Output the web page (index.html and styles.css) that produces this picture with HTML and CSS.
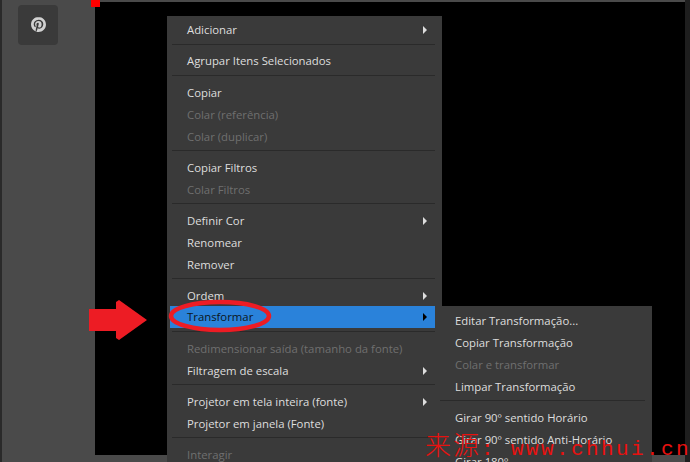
FILE: index.html
```html
<!DOCTYPE html>
<html>
<head>
  <title>Transformar</title>
  <link rel="stylesheet" href="styles.css">
</head>
<body>
  <div class="window">
    <div class="edge"></div>
    <div class="sidebar">
      <div class="source-btn">
        <svg class="pin-icon" viewBox="0 0 24 24"><path d="M12.017 0C5.396 0 .029 5.367.029 11.987c0 5.079 3.158 9.417 7.618 11.162-.105-.949-.199-2.403.041-3.439.219-.937 1.406-5.957 1.406-5.957s-.359-.72-.359-1.781c0-1.663.967-2.911 2.168-2.911 1.024 0 1.518.769 1.518 1.688 0 1.029-.653 2.567-.992 3.992-.285 1.193.6 2.165 1.775 2.165 2.128 0 3.768-2.245 3.768-5.487 0-2.861-2.063-4.869-5.008-4.869-3.41 0-5.409 2.562-5.409 5.199 0 1.033.394 2.143.889 2.741.099.12.112.225.085.345-.09.375-.293 1.199-.334 1.363-.053.225-.172.271-.401.165-1.495-.69-2.433-2.878-2.433-4.646 0-3.776 2.748-7.252 7.92-7.252 4.158 0 7.392 2.967 7.392 6.923 0 4.135-2.607 7.462-6.233 7.462-1.214 0-2.354-.629-2.758-1.379l-.749 2.848c-.269 1.045-1.004 2.352-1.498 3.146 1.123.345 2.306.535 3.55.535 6.607 0 11.985-5.365 11.985-11.987C23.97 5.39 18.592.026 11.985.026L12.017 0z"/></svg>
      </div>
    </div>
    <div class="preview">
      <div class="top-line"></div>
      <div class="canvas"></div>
      <div class="bottom-line"></div>
    </div>
    <div class="right-edge"></div>
  </div>

  <div class="handle"></div>

  <div class="menu main-menu">
    <div class="item sub">Adicionar</div>
    <div class="sep sep-low"></div>
    <div class="item">Agrupar Itens Selecionados</div>
    <div class="sep sep-wide"></div>
    <div class="item">Copiar</div>
    <div class="item off">Colar (referência)</div>
    <div class="item off">Colar (duplicar)</div>
    <div class="sep"></div>
    <div class="item">Copiar Filtros</div>
    <div class="item off">Colar Filtros</div>
    <div class="sep"></div>
    <div class="item sub">Definir Cor</div>
    <div class="item">Renomear</div>
    <div class="item">Remover</div>
    <div class="sep"></div>
    <div class="item sub">Ordem</div>
    <div class="item sub active">Transformar</div>
    <div class="sep sep-wide"></div>
    <div class="item off">Redimensionar saída (tamanho da fonte)</div>
    <div class="item sub">Filtragem de escala</div>
    <div class="sep"></div>
    <div class="item sub">Projetor em tela inteira (fonte)</div>
    <div class="item">Projetor em janela (Fonte)</div>
    <div class="sep"></div>
    <div class="item off">Interagir</div>
  </div>

  <div class="menu sub-menu">
    <div class="item">Editar Transformação...</div>
    <div class="item">Copiar Transformação</div>
    <div class="item off">Colar e transformar</div>
    <div class="item">Limpar Transformação</div>
    <div class="sep"></div>
    <div class="item">Girar 90º sentido Horário</div>
    <div class="item">Girar 90º sentido Anti-Horário</div>
    <div class="item">Girar 180º</div>
  </div>

  <svg class="marks" viewBox="0 0 690 462">
    <polygon class="arrow" points="89,309 116,309 116,302 119,300 147,320 119,340 116,338 116,331 89,331"/>
    <ellipse class="ring" cx="220" cy="316" rx="49" ry="14"/>
  </svg>

  <div class="watermark"><span class="watermark-cjk">来源</span>: www.chhui.cn</div>
</body>
</html>
```

FILE: styles.css
```css
html, body {
  margin: 0;
  height: 100%;
  overflow: hidden;
  background: #000;
}

body {
  font-family: "Open Sans", "Noto Sans", sans-serif;
  font-size: 11.35px;
}

.window {
  display: flex;
  height: 462px;
}

.edge {
  width: 2px;
  background: #2a2a2a;
}

.sidebar {
  width: 93px;
  padding: 5px 0 0 16px;
  box-sizing: border-box;
  background: #4a4a4a;
}

.source-btn {
  width: 40px;
  height: 40px;
  display: flex;
  align-items: center;
  justify-content: center;
  padding: 0 0 2px 1px;
  box-sizing: border-box;
  border-radius: 4px;
  background: #3a3a3a;
}

.pin-icon {
  width: 15px;
  height: 15px;
  fill: #d2d2d2;
}

.preview {
  flex: 1;
  display: flex;
  flex-direction: column;
}

.top-line {
  height: 2px;
  background: #4a4a4a;
}

.canvas {
  flex: 1;
  background: #000;
}

.bottom-line {
  height: 7px;
  background: #4a4a4a;
}

.right-edge {
  width: 5px;
  background: #1e1e1e;
}

.handle {
  position: absolute;
  left: 91px;
  top: 0;
  width: 9px;
  height: 7px;
  background: #f00;
}

.menu {
  position: absolute;
  box-sizing: border-box;
  background: #3a3a3a;
  color: #dedede;
  white-space: nowrap;
}

.main-menu {
  left: 167px;
  top: 16px;
  width: 275px;
  height: 446px;
  overflow: hidden;
  padding: 3px 7px 0 3px;
}

.sub-menu {
  left: 437px;
  top: 306px;
  width: 215px;
  height: 156px;
  overflow: hidden;
  padding: 4px 7px 0 3px;
}

.sub-menu .item {
  padding-left: 15px;
}

.item {
  position: relative;
  height: 22px;
  line-height: 22px;
  padding-left: 17px;
}

.off {
  color: #6f6f6f;
}

.active {
  margin-top: -1px;
  background: #2a82da;
  color: #0c1620;
}

.sub::after {
  content: "";
  position: absolute;
  right: 8px;
  top: 7px;
  border-left: 4px solid #dedede;
  border-top: 4px solid transparent;
  border-bottom: 4px solid transparent;
}

.active::after {
  border-left-color: #000;
}

.sep {
  height: 9px;
  margin-left: 2px;
  box-sizing: border-box;
  padding-top: 2px;
}

.sep-low {
  padding-top: 3px;
}

.sep-wide {
  height: 10px;
  padding-top: 3px;
}

.sub-menu .sep {
  margin-left: 0;
}

.sep::before {
  content: "";
  display: block;
  height: 1px;
  background: #2a2a2a;
}

.marks {
  position: absolute;
  left: 0;
  top: 0;
  width: 690px;
  height: 462px;
}

.arrow {
  fill: #ed1c24;
}

.ring {
  fill: none;
  stroke: #ed1c24;
  stroke-width: 4.5;
}

.watermark {
  position: absolute;
  left: 425px;
  top: 426px;
  height: 36px;
  overflow: hidden;
  color: #e8110f;
  font-family: "Liberation Mono", monospace;
  font-size: 21px;
  letter-spacing: 2.4px;
  line-height: 36px;
  white-space: nowrap;
}

.watermark-cjk {
  font-family: "Noto Sans CJK SC", sans-serif;
  font-size: 26px;
  font-weight: 300;
  letter-spacing: 2px;
}
```
